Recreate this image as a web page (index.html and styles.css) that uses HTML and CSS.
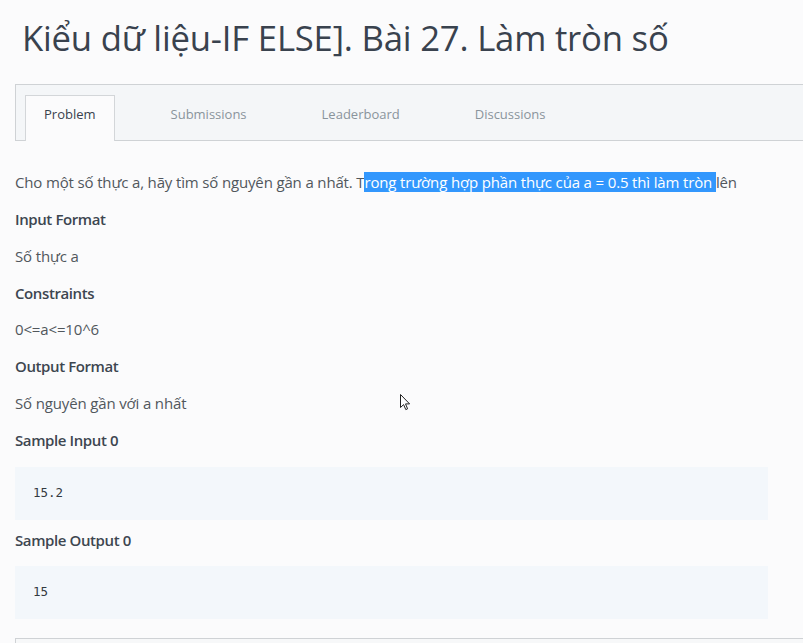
FILE: index.html
```html
<!DOCTYPE html>
<html lang="vi">
<head>
<meta charset="utf-8">
<title>Bài 27. Làm tròn số</title>
<link rel="stylesheet" href="styles.css">
</head>
<body>
<div class="page">
  <h1 class="title">Kiểu dữ liệu-IF ELSE]. Bài 27. Làm tròn số</h1>
  <nav class="tabs">
    <ul class="tab-list">
      <li class="tab active">Problem</li>
      <li class="tab">Submissions</li>
      <li class="tab">Leaderboard</li>
      <li class="tab">Discussions</li>
    </ul>
  </nav>
  <div class="content">
    <p class="text">Cho một số thực a, hãy tìm số nguyên gần a nhất. T<span class="sel">rong trường hợp phần thực của a = 0.5 thì làm tròn </span>lên</p>
    <p class="heading">Input Format</p>
    <p class="text">Số thực a</p>
    <p class="heading">Constraints</p>
    <p class="text">0&lt;=a&lt;=10^6</p>
    <p class="heading">Output Format</p>
    <p class="text">Số nguyên gần với a nhất</p>
    <p class="heading">Sample Input 0</p>
    <pre class="code">15.2</pre>
    <p class="heading sample-out">Sample Output 0</p>
    <pre class="code">15</pre>
  </div>
  <div class="footer-box"></div>
</div>
<svg class="cursor" width="12" height="18" viewBox="0 0 12 18" aria-hidden="true">
  <path d="M0.5 0.5 L0.5 13.5 L3.6 10.6 L5.8 15.6 L7.6 14.8 L5.5 9.9 L9.6 9.9 Z" fill="#ffffff" stroke="#222" stroke-width="1" stroke-linejoin="round"/>
</svg>
</body>
</html>
```
FILE: styles.css
```css
html, body {
  margin: 0;
  padding: 0;
  background: #fbfbfc;
  overflow: hidden;
}
body {
  font-family: "Open Sans", "Noto Sans", "Liberation Sans", sans-serif;
  color: #4f5559;
  height: 643px;
  position: relative;
}
.page {
  padding-left: 15px;
}
.title {
  margin: 15px 0 0 7px;
  font-size: 34.7px;
  line-height: 46px;
  font-weight: 400;
  color: #39424e;
  letter-spacing: -0.2px;
}
.tabs {
  margin-top: 23px;
  height: 55px;
  background: #f4f6f8;
  border-top: 1px solid #cfd2d5;
  border-bottom: 1px solid #cfd2d5;
  border-left: 1px solid #cfd2d5;
  display: flex;
  align-items: flex-end;
}
.tab-list {
  list-style: none;
  margin: 0 0 -1px 9px;
  padding: 0;
  display: flex;
  gap: 37px;
  align-items: flex-end;
}
.tab {
  font-size: 13px;
  line-height: 20px;
  color: #8a949c;
  padding: 8px 18px 17px;
  border: 1px solid transparent;
  border-bottom: none;
}
.tab.active {
  background: #fbfbfc;
  color: #39424e;
  border-color: #d3d6d9;
}
.content {
  padding-top: 31px;
  margin-right: 35px;
}
.text, .heading {
  margin: 0 0 15.85px;
  font-size: 15px;
  line-height: 21px;
}
.text {
  color: #51575c;
  letter-spacing: -0.15px;
}
.heading {
  font-weight: 600;
  color: #3d4650;
  letter-spacing: -0.4px;
}
.sel {
  background: #3297fd;
  color: #ffffff;
}
.code {
  margin: 0;
  background: #f3f7fb;
  height: 53px;
  box-sizing: border-box;
  padding: 16px 18px;
  font-family: "DejaVu Sans Mono", "Liberation Mono", monospace;
  font-size: 12.5px;
  line-height: 20px;
  color: #333a40;
}
.sample-out {
  margin-top: 10.5px;
  margin-bottom: 14.5px;
}
.footer-box {
  margin-top: 19px;
  height: 6px;
  background: #f7f8f9;
  border-top: 1px solid #cfd2d5;
  border-left: 1px solid #cfd2d5;
}
.cursor {
  position: absolute;
  left: 400px;
  top: 394px;
}
```
